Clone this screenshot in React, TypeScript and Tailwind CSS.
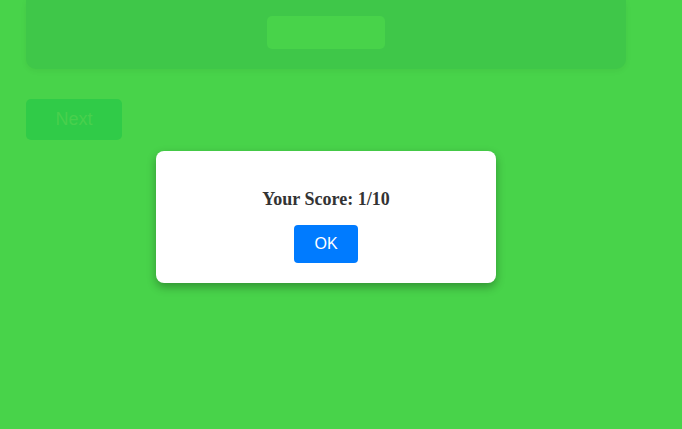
export default function App() {
  return (
    <div className="relative min-h-[429px] w-full overflow-hidden bg-[#48d34a] font-['Liberation_Sans',Arial,sans-serif]">
      <div className="ml-[26px] w-[600px]">
        <div className="flex h-[69px] justify-center rounded-b-[10px] bg-[#3fc749] pt-4 shadow-[0_2px_6px_rgba(0,0,0,0.05)]">
          <div className="h-[33px] w-[118px] rounded-[5px] bg-[#48d34a]" />
        </div>
        <button className="mt-[30px] h-[41px] w-[96px] rounded-[5px] bg-[#30cb48] text-[18px] text-[#48d04d]">
          Next
        </button>
      </div>

      <div className="absolute left-[156px] top-[151px] w-[340px] rounded-[8px] bg-white px-5 pb-5 pt-5 text-center shadow-[0_4px_10px_rgba(0,0,0,0.3)]">
        <h2 className="mb-[15px] mt-[18px] font-['Liberation_Serif','Times_New_Roman',serif] text-[18px] font-bold leading-[21px] text-[#333333]">
          Your Score: 1/10
        </h2>
        <button className="h-[38px] w-[64px] rounded-[4px] bg-[#007bff] text-[16px] text-white">
          OK
        </button>
      </div>
    </div>
  );
}
